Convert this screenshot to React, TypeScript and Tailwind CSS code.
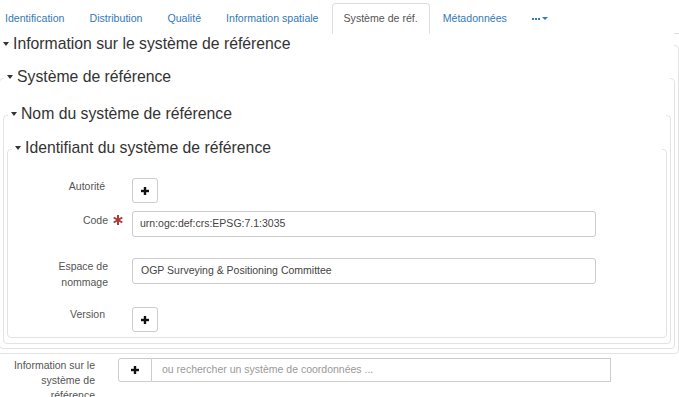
import type { ReactNode } from 'react';

const tabs = ['Identification', 'Distribution', 'Qualité', 'Information spatiale'];

function PlusIcon() {
  return (
    <svg width="8" height="8" viewBox="0 0 8 8">
      <rect x="0" y="2.8" width="8" height="2.4" fill="#111" />
      <rect x="2.8" y="0" width="2.4" height="8" fill="#111" />
    </svg>
  );
}

function PlusButton() {
  return (
    <button className="w-[26px] h-[25px] border border-[#ccc] rounded-[3px] bg-white flex items-center justify-center">
      <PlusIcon />
    </button>
  );
}

function Fieldset({ title, className, children }: { title: string; className: string; children?: ReactNode }) {
  return (
    <div className={`border border-[#e3e3e3] rounded-[4px] ${className}`}>
      <div className="-mt-[13px] mx-[4px] h-[22px] bg-white flex items-center pl-[3px] text-[15.75px] leading-none text-[#333]">
        <span className="w-0 h-0 border-x-[3px] border-x-transparent border-t-[4px] border-t-[#333] mr-[4px]" />
        {title}
      </div>
      {children}
    </div>
  );
}

export default function App() {
  return (
    <div className="w-[679px] h-[397px] overflow-hidden bg-white font-['Liberation_Sans',Arial,sans-serif]">
      <nav className="flex h-[34px] border-b border-[#ddd] -ml-[7px] text-[10.6px]">
        {tabs.map((t) => (
          <a key={t} className="mt-[3px] h-[31px] px-[11px] mr-[1px] border border-transparent flex items-center text-[#337ab7]">
            {t}
          </a>
        ))}
        <a className="mt-[3px] h-[31px] px-[11px] mr-[1px] border border-[#ddd] border-b-white rounded-t-[4px] bg-white flex items-center text-[#555]">
          Système de réf.
        </a>
        <a className="mt-[3px] h-[31px] px-[11px] mr-[1px] border border-transparent flex items-center text-[#337ab7]">
          Métadonnées
        </a>
        <a className="mt-[3px] h-[31px] px-[11px] border border-transparent flex items-center gap-[2px]">
          <span className="flex gap-[1px]">
            <span className="w-[2px] h-[2px] bg-[#337ab7]" />
            <span className="w-[2px] h-[2px] bg-[#337ab7]" />
            <span className="w-[2px] h-[2px] bg-[#337ab7]" />
          </span>
          <span className="w-0 h-0 border-x-[3px] border-x-transparent border-t-[3px] border-t-[#337ab7]" />
        </a>
      </nav>

      <Fieldset title="Information sur le système de référence" className="-ml-[5px] mt-[11px] pb-[4px]">
        <Fieldset title="Système de référence" className="mx-[3px] mt-[23px] pb-[4px]">
          <Fieldset title="Nom du système de référence" className="mx-[3px] mt-[27px] pb-[5px]">
            <Fieldset title="Identifiant du système de référence" className="mx-[3px] mt-[24px] pb-[5px]">
              <div className="text-[10.5px] text-[#555]">
                <div className="flex items-start mt-[19px]">
                  <div className="w-[100px] text-right leading-[15px] pt-[1px] pr-[3px]">Autorité</div>
                  <div className="w-[24px]" />
                  <PlusButton />
                </div>

                <div className="flex items-start mt-[8px]">
                  <div className="w-[100px] text-right leading-[15px] pt-[2px]">Code</div>
                  <div className="w-[24px] pl-[5px] pt-[4px]">
                    <svg width="10" height="10" viewBox="0 0 10 10">
                      <g stroke="#b03a3a" strokeWidth="2">
                        <line x1="5" y1="0" x2="5" y2="10" />
                        <line x1="0.7" y1="2.5" x2="9.3" y2="7.5" />
                        <line x1="0.7" y1="7.5" x2="9.3" y2="2.5" />
                      </g>
                    </svg>
                  </div>
                  <div className="w-[464px] h-[26px] border border-[#ccc] rounded-[3px] flex items-center pl-[7px] text-[#444]">
                    urn:ogc:def:crs:EPSG:7.1:3035
                  </div>
                </div>

                <div className="flex items-start mt-[21px]">
                  <div className="w-[100px] text-right leading-[16px]">
                    Espace de
                    <br />
                    nommage
                  </div>
                  <div className="w-[24px]" />
                  <div className="w-[464px] h-[26px] border border-[#ccc] rounded-[3px] flex items-center pl-[8px] text-[#444]">
                    OGP Surveying &amp; Positioning Committee
                  </div>
                </div>

                <div className="flex items-start mt-[17px]">
                  <div className="w-[100px] text-right leading-[14px] pr-[3px]">Version</div>
                  <div className="w-[24px]" />
                  <PlusButton />
                </div>
              </div>
            </Fieldset>
          </Fieldset>
        </Fieldset>
      </Fieldset>

      <div className="flex items-start mt-[4px] text-[10.5px]">
        <div className="w-[84px] ml-[11px] text-right leading-[15px] text-[#555]">
          Information sur le système de référence
        </div>
        <button className="ml-[23px] w-[34px] h-[24px] border border-[#ccc] rounded-l-[3px] bg-white flex items-center justify-center">
          <PlusIcon />
        </button>
        <div className="w-[459px] h-[24px] border border-l-0 border-[#ccc] flex items-center pl-[10px] text-[#999]">
          ou rechercher un système de coordonnées ...
        </div>
      </div>
    </div>
  );
}
